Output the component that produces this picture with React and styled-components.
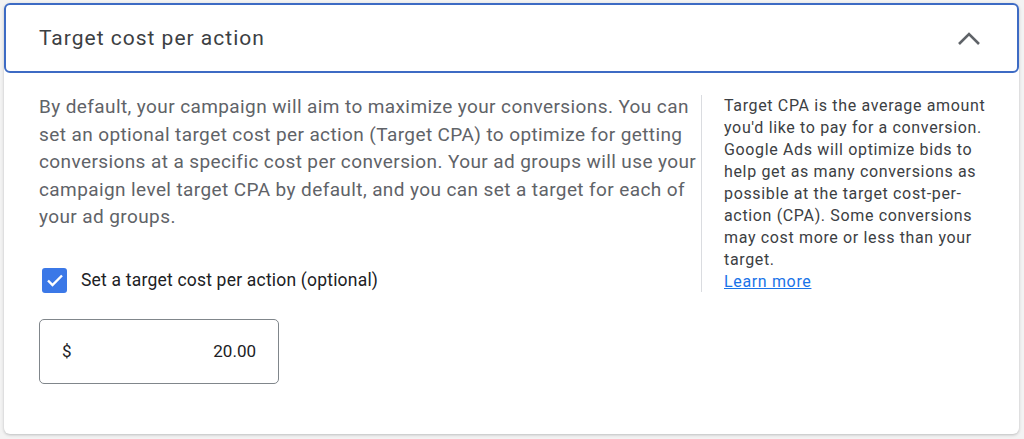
import React from 'react';
import styled, { createGlobalStyle } from 'styled-components';

const GlobalStyle = createGlobalStyle`
  html, body {
    margin: 0;
    padding: 0;
    background: #f3f3f3;
    font-family: Roboto, "Liberation Sans", Arial, sans-serif;
  }
`;

const Page = styled.div`
  padding: 3px 5px 4px 4px;
`;

const Card = styled.div`
  background: #fff;
  border-radius: 6px;
  box-shadow: 0 1px 3px rgba(60, 64, 67, 0.3);
  width: 1015px;
`;

const Header = styled.div`
  height: 66px;
  border: 2px solid #3d6bc4;
  border-radius: 6px;
  display: flex;
  align-items: center;
  justify-content: space-between;
  padding: 0 36px 0 33px;
`;

const Title = styled.h2`
  margin: 0;
  font-size: 21px;
  font-weight: 400;
  color: #3c4043;
  letter-spacing: 1px;
`;

const Body = styled.div`
  display: flex;
  padding: 20px 0 50px 35px;
`;

const Main = styled.div`
  width: 662px;
  flex-shrink: 0;
`;

const Intro = styled.p`
  margin: 0;
  font-size: 19px;
  line-height: 27.5px;
  color: #5f6368;
  letter-spacing: 0.4px;
`;

const CheckRow = styled.label`
  display: flex;
  align-items: center;
  gap: 14px;
  margin: 37px 0 0 3px;
  font-size: 17.5px;
  letter-spacing: 0.2px;
  color: #202124;
`;

const Box = styled.span`
  width: 25px;
  height: 25px;
  border-radius: 3px;
  background: #3b78e7;
  display: flex;
  align-items: center;
  justify-content: center;
`;

const Field = styled.div`
  margin-top: 26px;
  width: 240px;
  height: 65px;
  box-sizing: border-box;
  border: 1px solid #80868b;
  border-radius: 5px;
  display: flex;
  align-items: center;
  justify-content: space-between;
  padding: 0 22px;
  font-size: 17px;
  color: #202124;
`;

const Aside = styled.div`
  border-left: 1px solid #dadce0;
  padding: 0 0 0 22px;
  margin-top: 2px;
  height: 197px;
  width: 268px;
`;

const Help = styled.p`
  margin: 0;
  font-size: 16px;
  line-height: 22px;
  letter-spacing: 0.65px;
  color: #3c4043;
`;

const Link = styled.a`
  color: #1a73e8;
  text-decoration: underline;
`;

const Chevron = () => (
  <svg width="24" height="16" viewBox="0 0 24 16">
    <path d="M2 14 L12 4 L22 14" fill="none" stroke="#5f6368" strokeWidth="2.6" />
  </svg>
);

const Check = () => (
  <svg width="18" height="14" viewBox="0 0 18 14">
    <path d="M2 7.5 L6.5 12 L16 2.5" fill="none" stroke="#fff" strokeWidth="2.4" />
  </svg>
);

export default function App() {
  return (
    <>
      <GlobalStyle />
      <Page>
        <Card>
          <Header>
            <Title>Target cost per action</Title>
            <Chevron />
          </Header>
          <Body>
            <Main>
              <Intro>
                By default, your campaign will aim to maximize your conversions. You can
                set an optional target cost per action (Target CPA) to optimize for getting
                conversions at a specific cost per conversion. Your ad groups will use your
                campaign level target CPA by default, and you can set a target for each of
                your ad groups.
              </Intro>
              <CheckRow>
                <Box><Check /></Box>
                Set a target cost per action (optional)
              </CheckRow>
              <Field>
                <span>$</span>
                <span>20.00</span>
              </Field>
            </Main>
            <Aside>
              <Help>
                Target CPA is the average amount you'd like to pay for a conversion.
                Google Ads will optimize bids to help get as many conversions as
                possible at the target cost-per-action (CPA). Some conversions
                may cost more or less than your target.
                <br />
                <Link href="#">Learn more</Link>
              </Help>
            </Aside>
          </Body>
        </Card>
      </Page>
    </>
  );
}
